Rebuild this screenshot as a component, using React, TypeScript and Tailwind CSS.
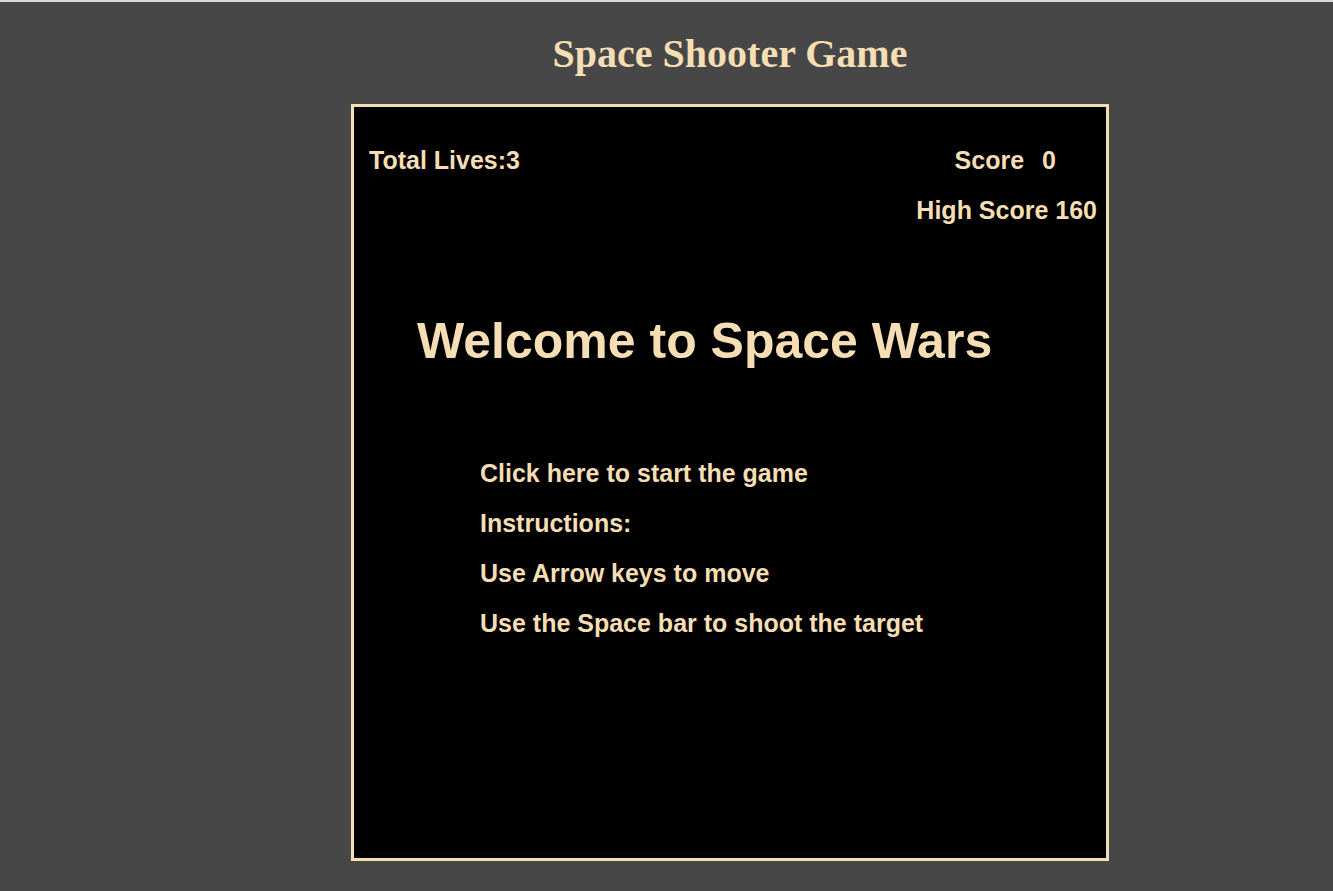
export default function App() {
  const instructions = [
    "Click here to start the game",
    "Instructions:",
    "Use Arrow keys to move",
    "Use the Space bar to shoot the target",
  ];

  return (
    <div className="min-h-screen bg-[#474747] border-t-2 border-[#dcdcdc]">
      {/* Page title */}
      <div className="ml-[351px] w-[758px] pt-[32px] h-[102px]">
        <h1 className="text-center text-[40px] leading-none font-bold text-[#f5deb3] font-['Liberation_Serif',serif]">
          Space Shooter Game
        </h1>
      </div>

      {/* Game board */}
      <div className="ml-[351px] w-[758px] h-[757px] border-[3px] border-[#f5deb3] bg-black text-[#f5deb3] font-['Liberation_Sans',Arial,sans-serif] font-bold">
        <div className="flex justify-between pt-[41px] pl-[15px] pr-[50px] text-[25px] leading-none">
          <span>Total Lives:3</span>
          <span>
            Score<span className="ml-[18px]">0</span>
          </span>
        </div>
        <div className="flex justify-end pr-[9px] mt-[25px] text-[25px] leading-none">
          <span>High Score 160</span>
        </div>

        <div className="pl-[63px] mt-[93px] text-[50px] leading-none">
          Welcome to Space Wars
        </div>

        <div className="pl-[126px] mt-[95px] flex flex-col gap-[25px] text-[25px] leading-none">
          {instructions.map((line) => (
            <span key={line} className="cursor-pointer">
              {line}
            </span>
          ))}
        </div>
      </div>
    </div>
  );
}
